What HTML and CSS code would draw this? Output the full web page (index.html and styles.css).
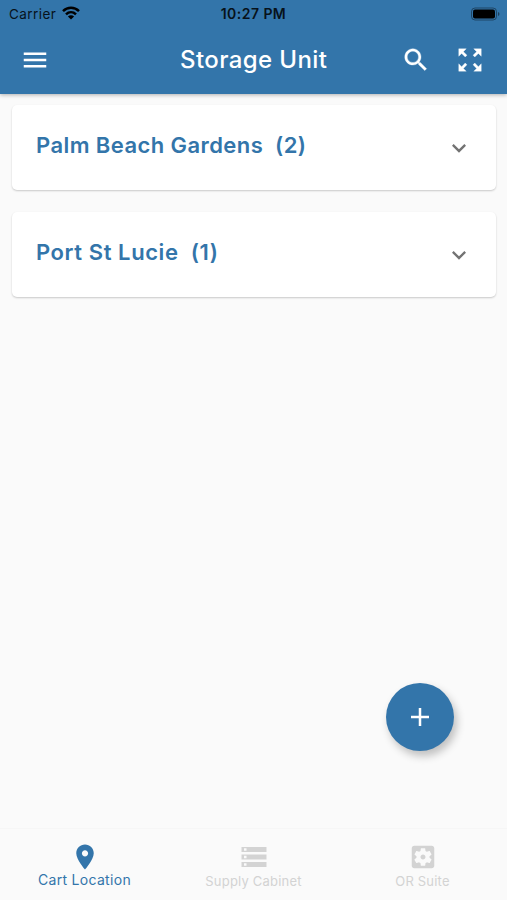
FILE: index.html
```html
<!DOCTYPE html>
<html lang="en">
<head>
<meta charset="utf-8">
<title>Storage Unit</title>
<link rel="stylesheet" href="styles.css">
</head>
<body>
<div class="app">
  <header class="header">
    <div class="status">
      <div class="carrier"><span>Carrier</span>
        <svg class="wifi" viewBox="0 0 18 14"><g fill="none" stroke="currentColor" stroke-width="2.5"><path d="M1 5.2C5.6.7 12.4.7 17 5.2"/><path d="M4 8.4c2.9-2.8 7.1-2.8 10 0"/></g><path d="M9 13.6 5.9 10.5c1.8-1.7 4.4-1.7 6.2 0z" fill="currentColor"/></svg>
      </div>
      <span class="time">10:27 PM</span>
      <svg class="battery" viewBox="0 0 30 14"><rect x="1.500" y="1" width="25" height="12" rx="3.500" fill="none" stroke="#000" stroke-opacity=".4"/><rect x="3" y="2.600" width="22" height="8.800" rx="2" fill="#000"/><path d="M28 5c2 .7 2 3.300 0 4z" fill="#000" fill-opacity=".45"/></svg>
    </div>
    <div class="toolbar">
      <svg class="icon menu" viewBox="0 0 24 24"><path d="M3 18h18v-2H3v2zm0-5h18v-2H3v2zm0-7v2h18V6H3z"/></svg>
      <h1 class="title">Storage Unit</h1>
      <svg class="icon search" viewBox="0 0 24 24"><path d="M15.500 14h-.79l-.28-.27C15.410 12.590 16 11.110 16 9.500 16 5.910 13.090 3 9.500 3S3 5.910 3 9.500 5.910 16 9.500 16c1.610 0 3.090-.59 4.230-1.570l.27.28v.79l5 4.990L20.490 19l-4.990-5zm-6 0C7.010 14 5 11.990 5 9.500S7.010 5 9.500 5 14 7.010 14 9.500 11.990 14 9.500 14z"/></svg>
      <svg class="icon expand" viewBox="0 0 24 24"><path d="M15 3l2.300 2.300-2.890 2.870 1.420 1.420L18.700 6.700 21 9V3zM3 9l2.300-2.300 2.870 2.890 1.420-1.420L6.700 5.300 9 3H3zm6 12l-2.300-2.300 2.890-2.870-1.420-1.420L5.300 17.300 3 15v6zm12-6l-2.300 2.300-2.870-2.890-1.420 1.420 2.890 2.870L15 21h6z"/></svg>
    </div>
  </header>
  <main class="list">
    <section class="card"><h2 class="name">Palm Beach Gardens&nbsp; (2)</h2>
      <svg class="chevron" viewBox="0 0 24 24"><path d="M16.590 8.590 12 13.170 7.410 8.590 6 10l6 6 6-6z"/></svg></section>
    <section class="card"><h2 class="name name-short">Port St Lucie&nbsp; (1)</h2>
      <svg class="chevron" viewBox="0 0 24 24"><path d="M16.590 8.590 12 13.170 7.410 8.590 6 10l6 6 6-6z"/></svg></section>
  </main>
  <button class="fab" aria-label="Add"><svg viewBox="0 0 18 18"><path d="M9 0v18M0 9h18"/></svg></button>
  <nav class="tabs">
    <div class="tab active"><svg viewBox="0 0 24 24"><path d="M12 2C8.130 2 5 5.130 5 9c0 5.250 7 13 7 13s7-7.750 7-13c0-3.870-3.130-7-7-7zm0 9.500c-1.380 0-2.500-1.120-2.500-2.500s1.120-2.500 2.500-2.500 2.500 1.120 2.500 2.500-1.120 2.500-2.500 2.500z"/></svg><span class="label">Cart Location</span></div>
    <div class="tab"><svg viewBox="0 0 24 24"><path d="M2 20h20v-4H2v4zm2-3h2v2H4v-2zM2 4v4h20V4H2zm4 3H4V5h2v2zm-4 7h20v-4H2v4zm2-3h2v2H4v-2z"/></svg><span class="label">Supply Cabinet</span></div>
    <div class="tab"><svg viewBox="0 0 24 24"><path d="M12 10c-1.100 0-2 .9-2 2s.9 2 2 2 2-.9 2-2-.9-2-2-2zm7-7H5c-1.110 0-2 .9-2 2v14c0 1.100.89 2 2 2h14c1.110 0 2-.9 2-2V5c0-1.100-.89-2-2-2zm-1.750 9c0 .23-.02.46-.05.68l1.480 1.160c.13.11.17.3.08.45l-1.400 2.420c-.09.15-.27.21-.43.15l-1.740-.7c-.36.28-.76.51-1.180.69l-.26 1.850c-.03.17-.18.3-.35.3h-2.800c-.17 0-.32-.13-.35-.29l-.26-1.850c-.43-.18-.82-.41-1.180-.69l-1.740.7c-.16.06-.34 0-.43-.15l-1.400-2.420c-.09-.15-.05-.34.08-.45l1.480-1.160c-.03-.23-.05-.46-.05-.69s.02-.46.05-.68l-1.480-1.160c-.13-.11-.17-.3-.08-.45l1.400-2.420c.09-.15.27-.21.43-.15l1.740.7c.36-.28.76-.51 1.180-.69l.26-1.850c.03-.17.18-.3.35-.3h2.800c.17 0 .32.130.35.290l.26 1.850c.43.18.82.41 1.180.69l1.740-.7c.16-.06.34 0 .43.15l1.400 2.420c.09.15.05.34-.08.45l-1.480 1.160c.03.23.05.46.05.69z"/></svg><span class="label">OR Suite</span></div>
  </nav>
</div>
</body>
</html>
```
FILE: styles.css
```css
* { box-sizing: border-box; }
body { margin: 0; font-family: Inter, "Liberation Sans", sans-serif; background: #fafafa; }
h1, h2 { margin: 0; }
.app { position: relative; width: 507px; height: 900px; display: flex; flex-direction: column; overflow: hidden; }
.header { height: 94px; flex: none; background: #3375aa; box-shadow: 0 1px 4px rgba(0, 0, 0, .3); }
.status { height: 27px; padding: 0 7px 0 9px; display: grid; grid-template-columns: 1fr auto 1fr; align-items: center; color: #07121b; font-size: 13.500px; }
.carrier { display: flex; align-items: center; gap: 6px; letter-spacing: .45px; }
.wifi { width: 18px; height: 14px; color: #000; margin-top: -2px; }
.time { font-size: 14px; font-weight: 600; letter-spacing: .45px; margin-right: 2px; }
.battery { width: 30px; height: 14px; justify-self: end; }
.toolbar { height: 66px; padding: 0 21px 0 20px; display: flex; align-items: center; color: #fff; }
.icon { width: 30px; height: 30px; fill: currentColor; stroke: currentColor; stroke-width: .25; flex: none; }
.menu { stroke-width: 0; }
.title { margin-left: 130px; width: 221px; font-size: 24px; font-weight: 500; letter-spacing: .4px; line-height: 30px; white-space: nowrap; }
.expand { width: 30px; height: 30px; margin-left: 24px; margin-top: -1px; }
.list { flex: 1; padding: 11px 11px 0 12px; display: flex; flex-direction: column; gap: 22px; }
.card { height: 85px; padding: 0 23px 0 24px; display: flex; justify-content: space-between; align-items: center; background: #fff; border-radius: 5px; box-shadow: 0 1px 2px rgba(0, 0, 0, .2); }
.name { color: #3375aa; font-size: 22px; font-weight: 600; letter-spacing: .42px; line-height: 28px; margin-bottom: 6px; white-space: nowrap; }
.name-short { letter-spacing: .58px; margin-bottom: 5px; }
.chevron { width: 28px; height: 28px; fill: #737373; }
.fab { position: absolute; left: 386px; top: 683px; width: 68px; height: 68px; padding: 0; border: 0; border-radius: 50%; background: #3375aa; display: flex; align-items: center; justify-content: center; box-shadow: 3px 5px 8px rgba(0, 0, 0, .24); }
.fab svg { width: 18px; height: 18px; fill: none; stroke: #fff; stroke-width: 2.500; }
.tabs { height: 72px; flex: none; display: grid; grid-template-columns: repeat(3, 1fr); border-top: 1px solid #f6f6f6; }
.tab { display: flex; flex-direction: column; align-items: center; padding-top: 13px; color: #d3d3d3; font-size: 13px; letter-spacing: .2px; white-space: nowrap; }
.tab svg { width: 30px; height: 30px; fill: currentColor; }
.label { line-height: 18px; }
.active { color: #3375aa; font-size: 14px; letter-spacing: .3px; }
.active .label { margin-top: -1px; }
```
